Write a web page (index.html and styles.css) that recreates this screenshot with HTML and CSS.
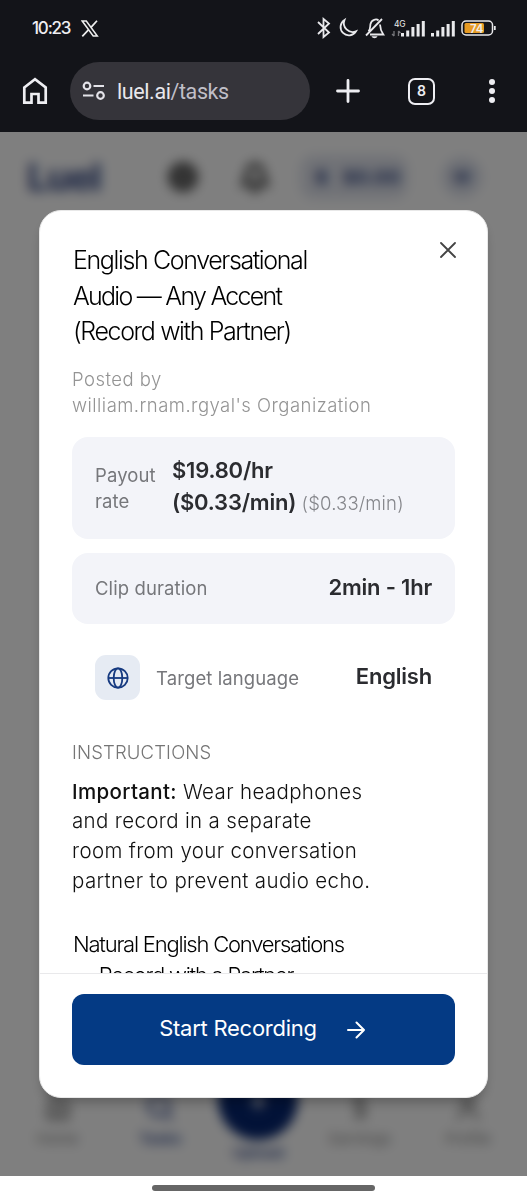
FILE: index.html
```html
<!DOCTYPE html>
<html lang="en">
  <head>
    <meta charset="UTF-8" />
    <meta name="viewport" content="width=device-width, initial-scale=1.0" />
    <title>Luel - Tasks</title>
    <link rel="stylesheet" href="styles.css">
  </head>
  <body>
    <header class="chrome">
      <div class="status-bar">
        <span class="clock">10:23</span>
        <svg class="x-logo" width="18" height="17" viewBox="0 0 18 17" fill="none" stroke="#eee">
          <path d="M1.2 1h4.1l11 15h-4.1z" stroke-width="1.5" />
          <path d="M16 .7 10 7.4M7.4 9.8 1.3 16.3" stroke-width="1.7" />
        </svg>
        <div class="status-icons">
          <svg width="180" height="24" viewBox="316 16 180 24" fill="none" stroke="#e9e9ec" stroke-width="1.8">
            <path d="m318 22 11 10.5-5.5 4.5V19l5.5 4.5L318 34" />
            <path d="M344.500 20a8.300 8.300 0 1 0 11.500 11.300A8.800 8.800 0 0 1 344.500 20z" />
            <path d="M366 35.500 382 19M368.500 31.500c2-2 1.500-5 2-7.500 1-4.500 6-5.500 8-3.500M380 24.500c.2 4 .5 6 3.300 10H370" />
            <path d="M371.500 36.300h6c-.8 2.500-5.200 2.500-6 0z" fill="#e9e9ec" stroke="none" />
            <path d="M394 31v5m-2-2 2 2M398.500 36v-5m2 2-2-2" stroke="#77777c" stroke-width="1.3" />
            <path d="M402.500 36.500V33M407.700 36.500v-6M412.900 36.500V27M418.100 36.500V24M423.300 36.500V21" stroke-width="3" />
            <path d="M432.500 36.500V33M437.700 36.500v-6M442.900 36.500V27M448.100 36.500V24M453.300 36.500V21" stroke-width="3" />
            <rect x="462" y="21" width="30.500" height="14" rx="4" stroke-width="1.500" />
            <rect x="464.500" y="23" width="19.500" height="10" rx="1.500" fill="#e69a22" stroke="none" />
            <path d="M494.800 26v4" />
            <g class="status-text">
              <text x="394" y="26.500" font-size="8.500">4G</text>
              <text x="470" y="32.500" font-size="11.500" font-weight="600">74</text>
            </g>
          </svg>
        </div>
      </div>
      <div class="toolbar">
        <svg class="home" width="26" height="28" viewBox="0 0 26 28" fill="none" stroke="#eeeef2" stroke-width="2.700">
          <path d="M2.300 10.500 13 2.300l10.700 8.200v15.200H16.500V17h-7v8.700H2.300z" />
        </svg>
        <div class="address">
          <svg width="24" height="20" viewBox="0 0 24 20" fill="none" stroke="#e4e3e9" stroke-width="2.200">
            <circle cx="5" cy="5" r="3.300" />
            <path d="M11.500 5H22M1 14.500h10.500" />
            <circle cx="18.500" cy="14.500" r="3.300" />
          </svg>
          <span class="url">luel.ai<span class="path">/tasks</span></span>
        </div>
        <svg class="plus" width="24" height="24" viewBox="0 0 24 24" stroke="#eeeef2" stroke-width="2.800" stroke-linecap="round">
          <path d="M12 1.500v21M1.500 12h21" />
        </svg>
        <span class="tab-count">8</span>
        <svg class="dots" width="8" height="24" viewBox="0 0 8 24" fill="#eeeef2">
          <circle cx="4" cy="3" r="3" />
          <circle cx="4" cy="12" r="3" />
          <circle cx="4" cy="21" r="3" />
        </svg>
      </div>
    </header>

    <main class="screen">
      <!-- page behind the dialog -->
      <div class="page">
        <div class="page-header">
          <span class="brand">Luel</span>
          <span class="support"></span>
          <svg class="bell" width="32" height="34" viewBox="0 0 32 34" fill="none" stroke="#444" stroke-width="5">
            <path d="M5 24c4-5 2-11 5-16 3-4 9-4 12 0 3 5 1 11 5 16zM12 30h8" />
          </svg>
          <span class="balance"><b>$</b>$0.00</span>
          <span class="avatar">W</span>
        </div>
        <nav class="tabs">
          <div class="tab">
            <svg width="30" height="30" viewBox="0 0 24 24"><path d="M4 10 12 3l8 7v11H4zM9 21v-8h6v8" /></svg>
            <span>Home</span>
          </div>
          <div class="tab active">
            <svg width="30" height="30" viewBox="0 0 24 24"><circle cx="11" cy="11" r="8" /><path d="m16 16 6 6" /></svg>
            <span>Tasks</span>
          </div>
          <div class="tab upload">
            <div class="upload-circle">+</div>
            <span>Upload</span>
          </div>
          <div class="tab">
            <svg width="30" height="30" viewBox="0 0 24 24"><path d="M16 7c-2-3-8-3-8 1s8 3 8 8-7 4-9 1M12 2v20" /></svg>
            <span>Earnings</span>
          </div>
          <div class="tab">
            <svg width="30" height="30" viewBox="0 0 24 24"><circle cx="12" cy="8" r="4" /><path d="M4 22c1-10 15-10 16 0" /></svg>
            <span>Profile</span>
          </div>
        </nav>
      </div>

      <div class="overlay">
        <div class="modal">
          <div class="modal-body">
            <button class="close" aria-label="Close">
              <svg width="16" height="16" viewBox="0 0 16 16" stroke="#444" stroke-width="1.800" stroke-linecap="round">
                <path d="m1 1 14 14M15 1 1 15" />
              </svg>
            </button>
            <h2 class="title">
              English Conversational<br>
              <span class="tight">Audio — Any Accent</span><br>
              (Record with Partner)
            </h2>
            <p class="posted">Posted by<br>william.rnam.rgyal's Organization</p>

            <div class="card payout">
              <span class="label">Payout<br>rate</span>
              <span class="value">$19.80/hr<br>($0.33/min) <small>($0.33/min)</small></span>
            </div>
            <div class="card">
              <span class="label">Clip duration</span>
              <span class="value duration">2min - 1hr</span>
            </div>
            <div class="card plain">
              <span class="globe">
                <svg width="22" height="22" viewBox="0 0 22 22" fill="none" stroke="#163a80" stroke-width="1.800">
                  <circle cx="11" cy="11" r="9.700" />
                  <ellipse cx="11" cy="11" rx="4.300" ry="9.700" />
                  <path d="M1.300 11h19.400" />
                </svg>
              </span>
              <span class="label target">Target language</span>
              <span class="value lang">English</span>
            </div>

            <h3 class="section">INSTRUCTIONS</h3>
            <p class="text"><b>Important:</b> Wear headphones<br>and record in a separate<br>room from your conversation<br>partner to prevent audio echo.</p>
            <h4 class="subtitle">Natural English Conversations<br>— Record with a Partner</h4>
          </div>
          <div class="modal-footer">
            <button class="start">
              <span>Start Recording</span>
              <svg width="18" height="18" viewBox="0 0 18 18" fill="none" stroke="#fff" stroke-width="2" stroke-linecap="round" stroke-linejoin="round">
                <path d="M1 9h16M9.500 1.500 17 9l-7.500 7.500" />
              </svg>
            </button>
          </div>
        </div>
      </div>
    </main>

    <div class="gesture-bar"><span></span></div>
  </body>
</html>
```
FILE: styles.css
```css
* {
  box-sizing: border-box;
}

body {
  margin: 0;
  height: 1200px;
  display: flex;
  flex-direction: column;
  overflow: hidden;
  font-family: Inter, "Liberation Sans", sans-serif;
  background: #fff;
}

h2, h3, h4, p {
  margin: 0;
}

button {
  border: none;
  padding: 0;
  font-family: inherit;
  cursor: pointer;
}

/* phone + browser bars */
.chrome {
  height: 132px;
  flex: none;
  background: #131419;
  color: #eeeef2;
}

.status-bar {
  height: 56px;
  display: flex;
  align-items: center;
  padding-left: 32px;
}

.clock {
  width: 49px;
  font-size: 17px;
  font-weight: 500;
  letter-spacing: -1.2px;
}

.x-logo {
  margin-top: 1px;
}

.status-icons {
  height: 24px;
  margin-left: auto;
  margin-right: 31px;
}

.status-text {
  fill: #eee;
  stroke: none;
  letter-spacing: -0.3px;
}

.toolbar {
  height: 70px;
  display: flex;
  align-items: center;
  padding-left: 22px;
}

.address {
  width: 240px;
  height: 58px;
  margin-left: 22px;
  padding-left: 12px;
  display: flex;
  align-items: center;
  gap: 11px;
  border-radius: 29px;
  background: #35343a;
}

.url {
  font-family: Roboto, sans-serif;
  font-size: 21.5px;
  letter-spacing: -0.4px;
  color: #e8e7ec;
}

.path {
  color: #c0bfc8;
}

.plus {
  margin-left: 26px;
}

.tab-count {
  width: 27px;
  height: 27px;
  margin-left: 48px;
  border: 2.7px solid #eeeef2;
  border-radius: 7px;
  font-size: 14px;
  font-weight: 600;
  line-height: 21px;
  text-align: center;
}

.dots {
  margin-left: 53px;
}

/* page */
.screen {
  position: relative;
  height: 1044px;
  flex: none;
  overflow: hidden;
}

.page {
  height: 100%;
  display: flex;
  flex-direction: column;
  justify-content: space-between;
  background: #fff;
}

.page-header {
  height: 90px;
  display: flex;
  align-items: center;
  padding-left: 27px;
}

.brand {
  width: 141px;
  font-size: 38px;
  font-weight: 800;
  letter-spacing: -1.5px;
  color: #4a5c92;
}

.support {
  width: 30px;
  height: 30px;
  border: 8px solid #555;
  border-radius: 50%;
  background: #777;
}

.bell {
  margin-left: 41px;
}

.balance {
  width: 108px;
  height: 44px;
  margin-left: 29px;
  padding-left: 15px;
  display: flex;
  align-items: center;
  gap: 15px;
  border-radius: 14px;
  background: #e2e5ee;
  font-size: 19px;
  font-weight: 800;
  color: #4a5c92;
}

.avatar {
  width: 40px;
  height: 40px;
  margin-left: 34px;
  border-radius: 50%;
  background: #dde1ec;
  line-height: 40px;
  text-align: center;
  font-weight: 800;
  color: #4a5c92;
}

.tabs {
  height: 105px;
  display: grid;
  grid-template-columns: 103px 102px 94px 110px 106px;
  padding: 21px 6px 0;
}

.tab {
  display: flex;
  flex-direction: column;
  align-items: center;
  gap: 7px;
  font-size: 15px;
  color: #888;
}

.tab svg {
  fill: none;
  stroke: #999;
  stroke-width: 3;
}

.tab.active {
  color: #3d5596;
  font-weight: 600;
}

.tab.active svg {
  stroke: #5a6ca4;
}

.upload {
  margin-top: -32px;
  gap: 3px;
  color: #3d5596;
  font-weight: 600;
}

.upload-circle {
  width: 80px;
  height: 80px;
  flex: none;
  border-radius: 50%;
  background: #05256f;
  color: #fff;
  font-size: 30px;
  line-height: 78px;
  text-align: center;
}

/* dialog */
.overlay {
  position: absolute;
  inset: 0;
  padding: 78px 39px;
  background: rgba(0, 0, 0, 0.5);
  backdrop-filter: blur(6px);
}

.modal {
  height: 888px;
  display: flex;
  flex-direction: column;
  overflow: hidden;
  border: 1px solid #e8e8e8;
  border-radius: 22px;
  background: #fff;
  box-shadow: 0 8px 12px -3px rgba(0, 0, 0, 0.25);
}

.modal-body {
  position: relative;
  height: 762px;
  flex: none;
  padding: 32px 32px 0;
  overflow: hidden;
}

.close {
  position: absolute;
  top: 31px;
  right: 31px;
  width: 16px;
  height: 16px;
  background: none;
}

.close svg {
  display: block;
}

.title {
  padding-left: 1px;
  font-size: 25px;
  font-weight: 300;
  line-height: 35.5px;
  letter-spacing: -1.38px;
  color: #000;
}

.title .tight {
  letter-spacing: -1.75px;
}

.posted {
  margin-top: 16px;
  font-size: 18.5px;
  font-weight: 300;
  line-height: 26px;
  letter-spacing: 0.46px;
  color: #949494;
}

.card {
  height: 71px;
  margin-top: 14px;
  padding: 0 23px;
  display: flex;
  align-items: center;
  justify-content: space-between;
  border-radius: 16px;
  background: #f3f4f9;
}

.payout {
  height: 102px;
  margin-top: 19px;
  justify-content: flex-start;
}

.label {
  padding-top: 2px;
  font-size: 18.5px;
  line-height: 25.5px;
  letter-spacing: 0.1px;
  color: #76777b;
}

.payout .label {
  width: 77px;
}

.value {
  font-size: 22px;
  font-weight: 600;
  line-height: 32px;
  letter-spacing: -0.2px;
  color: #2b2c30;
}

.payout .value {
  padding-bottom: 2px;
}

.value small {
  font-size: 18.5px;
  font-weight: 300;
  letter-spacing: 0.15px;
  color: #85868b;
}

.duration, .lang {
  padding-bottom: 3px;
}

.plain {
  height: 80px;
  background: none;
}

.globe {
  width: 45px;
  height: 45px;
  display: flex;
  align-items: center;
  justify-content: center;
  border-radius: 11px;
  background: #e6ebf3;
}

.target {
  margin-left: 16px;
  margin-right: auto;
}

.section {
  margin-top: 21px;
  font-size: 18.5px;
  font-weight: 300;
  line-height: 26px;
  letter-spacing: 0.15px;
  color: #757575;
}

.text {
  margin-top: 12px;
  font-size: 20.5px;
  font-weight: 300;
  line-height: 29.8px;
  letter-spacing: 0.35px;
  color: #111;
}

.text b {
  font-weight: 500;
}

.subtitle {
  margin-top: 33px;
  padding-left: 1px;
  font-size: 22px;
  font-weight: 300;
  line-height: 31.5px;
  letter-spacing: -1.22px;
  color: #000;
}

.modal-footer {
  flex: 1;
  padding: 20px 32px;
  border-top: 1px solid #e9e9eb;
}

.start {
  width: 100%;
  height: 71px;
  display: flex;
  align-items: center;
  justify-content: center;
  gap: 30px;
  border-radius: 12px;
  background: #043a84;
  color: #fff;
  font-size: 22px;
  letter-spacing: -0.25px;
}

.start span {
  margin-left: -3px;
  padding-bottom: 4px;
}

/* android gesture bar */
.gesture-bar {
  height: 24px;
  display: flex;
  align-items: center;
  justify-content: center;
}

.gesture-bar span {
  width: 223px;
  height: 6px;
  border-radius: 3px;
  background: #666;
}
```
